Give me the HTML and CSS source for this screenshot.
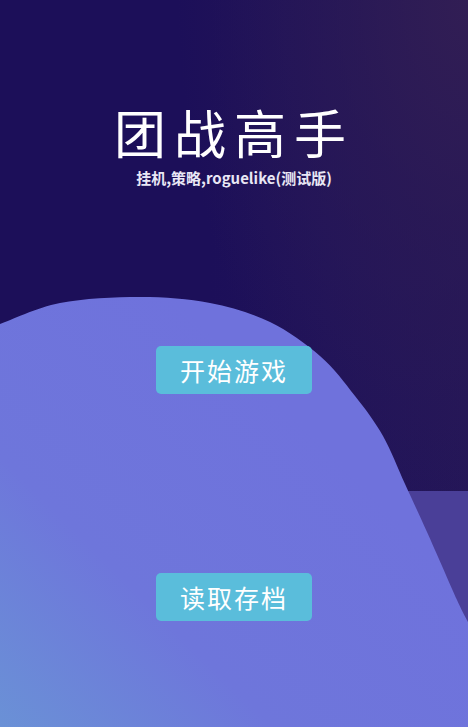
FILE: index.html
```html
<!DOCTYPE html>
<html lang="zh-CN">
<head>
<meta charset="utf-8">
<title>团战高手</title>
<link rel="stylesheet" href="styles.css">
</head>
<body>
<main class="screen">
  <svg class="backdrop" viewBox="0 0 468 727" preserveAspectRatio="none" aria-hidden="true">
    <defs>
      <linearGradient id="hill" x1="0" y1="1" x2="0.7" y2="0.35">
        <stop offset="0" stop-color="#6a91d6"/>
        <stop offset="0.45" stop-color="#6e76db"/>
        <stop offset="1" stop-color="#6f72dc"/>
      </linearGradient>
    </defs>
    <rect class="band" x="0" y="491" width="468" height="236"/>
    <path fill="url(#hill)" d="M0,324 C10,320.5 36.7,307.5 60,303 C83.3,298.5 115,297 140,297 C165,297 188.3,298.8 210,303 C231.7,307.2 251.7,313.2 270,322 C288.3,330.8 305.8,343.7 320,356 C334.2,368.3 344.5,382.7 355,396 C365.5,409.3 374.7,421.3 383,436 C391.3,450.7 397.7,468 405,484 C412.3,500 418.3,512.7 427,532 C435.7,551.3 450.2,585 457,600 C463.8,615 466.2,618.3 468,622 L468,727 L0,727 Z"/>
  </svg>

  <header class="title-block">
    <h1 class="title">团战高手</h1>
    <p class="subtitle">挂机,策略,roguelike(测试版)</p>
  </header>

  <nav class="menu">
    <button class="menu-btn" type="button">开始游戏</button>
    <button class="menu-btn" type="button">读取存档</button>
  </nav>
</main>
</body>
</html>
```

FILE: styles.css
```css
html, body {
  margin: 0;
  padding: 0;
  height: 100%;
}

body {
  font-family: "Noto Sans CJK SC", "Noto Sans", sans-serif;
  color: #ffffff;
  background: #1c0f59;
}

.screen {
  position: relative;
  width: 468px;
  height: 727px;
  overflow: hidden;
  display: flex;
  flex-direction: column;
  align-items: center;
  background:
    radial-gradient(ellipse 62% 70% at 100% 0%, rgba(50, 30, 84, 0.95) 0%, rgba(45, 27, 84, 0.6) 45%, rgba(28, 15, 89, 0) 100%),
    linear-gradient(90deg, #1c0f59 0%, #1c0f59 45%, #20135a 70%, #241658 100%);
}

.backdrop {
  position: absolute;
  inset: 0;
  width: 100%;
  height: 100%;
  z-index: 0;
}

.band {
  fill: #4a3f98;
}

.title-block {
  position: relative;
  z-index: 1;
  display: flex;
  flex-direction: column;
  align-items: center;
  padding-top: 105px;
}

.title {
  margin: 0;
  font-size: 52px;
  font-weight: 400;
  line-height: 54px;
  letter-spacing: 8px;
}

.subtitle {
  margin: 10px 0 0;
  font-size: 15px;
  font-weight: 700;
  line-height: 18px;
  color: #e9e7f5;
}

.menu {
  position: relative;
  z-index: 1;
  display: flex;
  flex-direction: column;
  align-items: center;
  gap: 179px;
  margin-top: 159px;
}

.menu-btn {
  width: 156px;
  height: 48px;
  padding: 0;
  border: none;
  border-radius: 5px;
  background: #5abddb;
  color: #ffffff;
  font-family: "Noto Sans CJK SC", "Noto Sans", sans-serif;
  font-size: 25px;
  font-weight: 400;
  letter-spacing: 2px;
  line-height: 48px;
  cursor: pointer;
}
```
